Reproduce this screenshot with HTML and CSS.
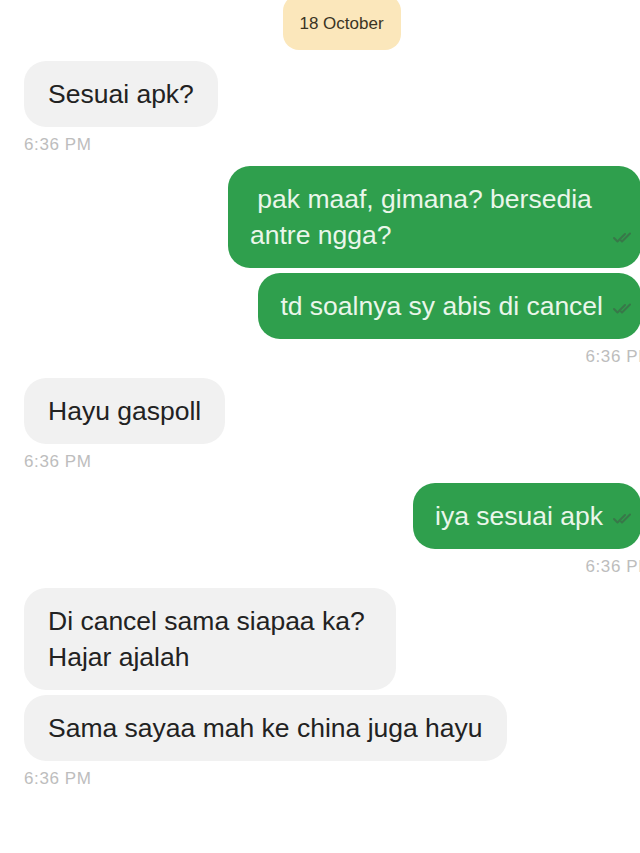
FILE: index.html
```html
<!DOCTYPE html>
<html lang="id">
<head>
<meta charset="utf-8">
<title>Chat</title>
<link rel="stylesheet" href="styles.css">
</head>
<body>
<div class="chat">
  <div class="date-pill">18 October</div>

  <div class="bubble in">Sesuai apk?</div>
  <div class="time in-time">6:36 PM</div>

  <div class="bubble out out-wide">
    <span class="text">&nbsp;pak maaf, gimana? bersedia antre ngga?</span>
    <svg class="check" viewBox="0 0 22 13" width="22" height="13"><path d="M1 7 L4.5 10.5 L12 3" /><path d="M8 9.5 L9 10.5 L17 2.5" /></svg>
  </div>
  <div class="bubble out">
    <span class="text">td soalnya sy abis di cancel</span>
    <svg class="check" viewBox="0 0 22 13" width="22" height="13"><path d="M1 7 L4.5 10.5 L12 3" /><path d="M8 9.5 L9 10.5 L17 2.5" /></svg>
  </div>
  <div class="time out-time">6:36 PM</div>

  <div class="bubble in">Hayu gaspoll</div>
  <div class="time in-time">6:36 PM</div>

  <div class="bubble out">
    <span class="text">iya sesuai apk</span>
    <svg class="check" viewBox="0 0 22 13" width="22" height="13"><path d="M1 7 L4.5 10.5 L12 3" /><path d="M8 9.5 L9 10.5 L17 2.5" /></svg>
  </div>
  <div class="time out-time">6:36 PM</div>

  <div class="bubble in">Di cancel sama siapaa ka?&nbsp;<br>Hajar ajalah</div>
  <div class="bubble in">Sama sayaa mah ke china juga hayu</div>
  <div class="time in-time">6:36 PM</div>
</div>
</body>
</html>
```

FILE: styles.css
```css
html, body {
  margin: 0;
  padding: 0;
  background: #ffffff;
  overflow: hidden;
}

body {
  width: 640px;
  height: 853px;
  font-family: "Liberation Sans", Arial, sans-serif;
}

.chat {
  width: 653px;
  box-sizing: border-box;
  padding-left: 24px;
  display: flex;
  flex-direction: column;
}

.date-pill {
  align-self: center;
  margin-left: 6px;
  margin-top: -5px;
  width: 118px;
  height: 55px;
  box-sizing: border-box;
  background: #fbe7bb;
  border-radius: 16px;
  color: #3a3424;
  font-size: 17px;
  display: flex;
  align-items: center;
  justify-content: center;
  padding-top: 3px;
  margin-bottom: 11px;
}

.bubble {
  font-size: 26.5px;
  line-height: 36px;
  border-radius: 22px;
  box-sizing: border-box;
}

.bubble + .bubble {
  margin-top: 5px;
}

.in {
  align-self: flex-start;
  background: #f1f1f1;
  color: #222222;
  padding: 15px 24px;
}

.out {
  align-self: flex-end;
  margin-right: 12px;
  background: #2f9f4d;
  color: #eaf6ea;
  padding: 15px 6px 15px 22px;
  display: flex;
  align-items: flex-end;
}

.out-wide {
  max-width: 413px;
}

.out .text {
  flex: 0 1 auto;
  min-width: 0;
}

.check {
  flex: none;
  margin-left: 10px;
  margin-bottom: 9px;
  fill: none;
  stroke: #3a7449;
  stroke-width: 2;
  stroke-linecap: round;
  stroke-linejoin: round;
  opacity: 0.9;
}

.time {
  font-size: 17px;
  line-height: 20px;
  letter-spacing: 0.6px;
  color: #bdbdbd;
  margin-top: 8px;
  margin-bottom: 11px;
}

.in-time {
  align-self: flex-start;
}

.out-time {
  align-self: flex-end;
}
```
